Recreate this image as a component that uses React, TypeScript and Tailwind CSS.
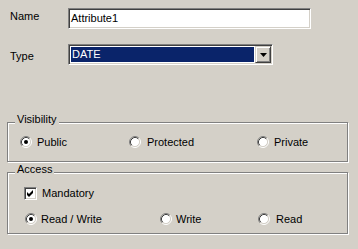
import React from 'react';

const SUNKEN =
  'border border-t-[#808080] border-l-[#808080] border-r-white border-b-white shadow-[inset_1px_1px_0_#404040,inset_-1px_-1px_0_#d4d0c8]';
const RAISED =
  'border border-t-[#d4d0c8] border-l-[#d4d0c8] border-r-[#404040] border-b-[#404040] shadow-[inset_1px_1px_0_white,inset_-1px_-1px_0_#808080]';
const ETCHED = 'border border-[#808080] shadow-[1px_1px_0_white,inset_1px_1px_0_white]';

function Radio({ checked = false }: { checked?: boolean }) {
  return (
    <svg width="12" height="12" viewBox="0 0 12 12" className="shrink-0">
      <circle cx="6" cy="6" r="4.5" fill="white" />
      <path d="M2.11 9.89 A5.5 5.5 0 0 1 9.89 2.11" fill="none" stroke="#808080" />
      <path d="M9.89 2.11 A5.5 5.5 0 0 1 2.11 9.89" fill="none" stroke="white" />
      <path d="M2.82 9.18 A4.5 4.5 0 0 1 9.18 2.82" fill="none" stroke="#404040" />
      <path d="M9.18 2.82 A4.5 4.5 0 0 1 2.82 9.18" fill="none" stroke="#d4d0c8" />
      {checked && <circle cx="6" cy="6" r="2" fill="black" />}
    </svg>
  );
}

function Check() {
  return (
    <span className={`${SUNKEN} flex h-[13px] w-[13px] shrink-0 bg-white`}>
      <svg width="11" height="11" viewBox="0 0 11 11">
        <polygon points="2,4 4,6 8,2 8,5 4,9 2,7" fill="black" />
      </svg>
    </span>
  );
}

function Group({ title, className, children }: { title: string; className: string; children: React.ReactNode }) {
  return (
    <div className={`relative ml-[7px] w-[341px] ${ETCHED} ${className}`}>
      <span className="absolute -top-[10px] left-[7px] bg-[#d4d0c8] px-[2px]">{title}</span>
      {children}
    </div>
  );
}

function Option({ label, checked, w, gap = 'ml-[5px]' }: { label: string; checked?: boolean; w: string; gap?: string }) {
  return (
    <div className={`flex h-3 items-center ${w}`}>
      <Radio checked={checked} />
      <span className={`${gap} whitespace-nowrap`}>{label}</span>
    </div>
  );
}

export default function App() {
  return (
    <div className="h-[249px] w-[358px] overflow-hidden bg-[#d4d0c8] pt-2 font-['Liberation_Sans',Arial,sans-serif] text-[11px] leading-[13px] text-black">
      <div className="flex h-[21px]">
        <span className="w-[68px] pl-[10px] pt-[2px]">Name</span>
        <div className={`${SUNKEN} h-[21px] w-[243px] bg-white pl-[2px] pt-[3px]`}>Attribute1</div>
      </div>

      <div className="mt-[15px] flex h-[21px]">
        <span className="w-[68px] pl-[10px] pt-[6px]">Type</span>
        <div className={`${SUNKEN} flex h-[21px] w-[205px] bg-white p-[2px]`}>
          <div className="flex-1 bg-[#0a246a] pl-[1px] pt-[1px] text-white">DATE</div>
          <div className={`${RAISED} ml-[1px] -my-[1px] -mr-[1px] flex w-4 items-center justify-center bg-[#d4d0c8]`}>
            <svg width="7" height="4" viewBox="0 0 7 4">
              <polygon points="0,0 7,0 3.5,4" fill="black" />
            </svg>
          </div>
        </div>
      </div>

      <Group title="Visibility" className="mt-[57px] h-[40px]">
        <div className="mt-[13px] flex pl-[12px]">
          <Option label="Public" checked w="w-[109px]" />
          <Option label="Protected" w="w-[128px]" gap="ml-[6px]" />
          <Option label="Private" w="w-[80px]" />
        </div>
      </Group>

      <Group title="Access" className="mt-[10px] h-[62px]">
        <div className="mt-[14px] flex h-[13px] items-center pl-[16px]">
          <Check />
          <span className="ml-[5px]">Mandatory</span>
        </div>
        <div className="mt-[13px] flex pl-[17px]">
          <Option label="Read / Write" checked w="w-[135px]" gap="ml-[4px]" />
          <Option label="Write" w="w-[98px]" gap="ml-[4px]" />
          <Option label="Read" w="w-[60px]" gap="ml-[6px]" />
        </div>
      </Group>
    </div>
  );
}
